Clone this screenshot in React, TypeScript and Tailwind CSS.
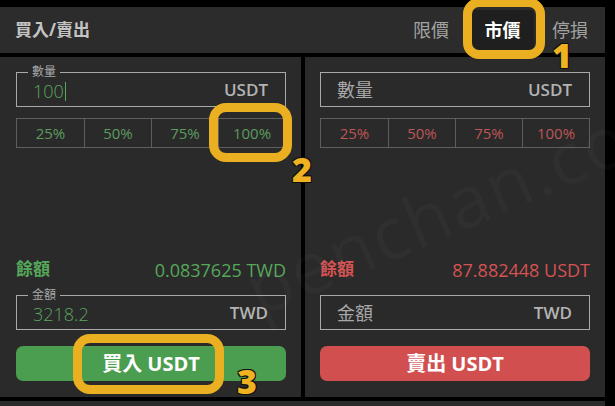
import React from 'react';

const FONT = '"Open Sans", "Noto Sans CJK TC", sans-serif';

type Side = 'buy' | 'sell';

function Field({
  label,
  value,
  unit,
  side,
}: {
  label: string;
  value?: string;
  unit: string;
  side: Side;
}) {
  return (
    <div className="relative flex h-[35px] items-center justify-between border border-[#a9a9a9] pl-[16px] pr-[17px]">
      {value ? (
        <>
          <span className="absolute left-[11px] top-[-8px] bg-[#2a2a2a] px-[4px] text-[12px] leading-[14px] text-[#a8a8a8]">
            {label}
          </span>
          <span
            className={`mt-[3px] flex items-center text-[18px] font-light leading-none ${
              side === 'buy' ? 'text-[#5aa65e]' : 'text-[#d45454]'
            }`}
          >
            {value}
            {label === '數量' ? <span className="ml-[1px] h-[19px] w-px bg-[#5aa65e]" /> : null}
          </span>
        </>
      ) : (
        <span className="text-[18px] leading-none text-[#a8a8a8]">{label}</span>
      )}
      <span className="text-[17px] font-semibold leading-none text-[#b3b3b3]">{unit}</span>
    </div>
  );
}

function Percents({ side }: { side: Side }) {
  const color = side === 'buy' ? 'text-[#5b9c5e]' : 'text-[#bd5656]';
  return (
    <div className="grid h-[30px] grid-cols-4 border border-[#5e5e5e]">
      {['25%', '50%', '75%', '100%'].map((p, i) => (
        <div
          key={p}
          className={`flex items-center justify-center text-[15px] ${color} ${
            i > 0 ? 'border-l border-[#5e5e5e]' : ''
          }`}
        >
          {p}
        </div>
      ))}
    </div>
  );
}

function Panel({ side }: { side: Side }) {
  const buy = side === 'buy';
  const accent = buy ? 'text-[#55a85a]' : 'text-[#d65252]';
  return (
    <section
      className={`flex h-full flex-col bg-[#2a2a2a] pb-[16px] pt-[15px] ${
        buy ? 'w-[301px] pl-[16px] pr-[15px]' : 'w-[300px] pl-[15px] pr-[15px]'
      }`}
    >
      <Field label="數量" value={buy ? '100' : undefined} unit="USDT" side={side} />
      <div className="mt-[11px]">
        <Percents side={side} />
      </div>
      <div className="flex-1" />
      <div className={`flex items-center justify-between ${accent}`}>
        <span className="text-[17px] font-bold">餘額</span>
        <span className="mt-[3px] text-[18px] leading-none">{buy ? '0.0837625 TWD' : '87.882448 USDT'}</span>
      </div>
      <div className="mt-[14px]">
        <Field label="金額" value={buy ? '3218.2' : undefined} unit="TWD" side={side} />
      </div>
      <button
        className={`mt-[16px] flex h-[35px] items-center justify-center rounded-[7px] text-[20px] font-bold text-white ${
          buy ? 'bg-[#4b9d4f]' : 'bg-[#d14f4f]'
        }`}
      >
        {buy ? '買入 USDT' : '賣出 USDT'}
      </button>
    </section>
  );
}

const mark =
  'absolute text-[34px] font-extrabold leading-none text-[#efb321] [text-shadow:1px_1px_0_#111,-1px_-1px_0_#111,1px_-1px_0_#111,-1px_1px_0_#111]';

export default function App() {
  return (
    <div className="relative h-[406px] w-[615px] overflow-hidden bg-black" style={{ fontFamily: FONT }}>
      <div className="flex w-[605px] flex-col pt-[7px]">
        <header className="flex h-[46px] items-center justify-between bg-[#2c2c2c] pl-[15px] pr-[17px]">
          <h1 className="text-[17px] font-bold text-[#c4c4c4]">買入/賣出</h1>
          <nav className="flex items-center text-[18px]">
            <span className="text-[#a3a3a3]">限價</span>
            <span className="ml-[22px] flex h-[40px] w-[63px] items-center justify-center rounded-[4px] bg-[#1f1f1f] font-bold text-white">
              市價
            </span>
            <span className="ml-[18px] text-[#a3a3a3]">停損</span>
          </nav>
        </header>
        <div className="mt-[4px] flex h-[340px] gap-[4px]">
          <Panel side="buy" />
          <Panel side="sell" />
        </div>
        <div className="mt-[4px] h-[10px] bg-[#2a2a2a]" />
      </div>

      {/* watermark */}
      <div className="pointer-events-none absolute left-[232px] top-[176px] rotate-[-23deg] text-[72px] leading-none tracking-[2px] text-white/[0.025]">
        penchan.co
      </div>

      {/* annotations */}
      <div className="pointer-events-none absolute left-[463px] top-[-2px] h-[61px] w-[82px] rounded-[16px] border-[9px] border-[#ebb022]" />
      <span className={`${mark} left-[552px] top-[38px]`}>1</span>
      <div className="pointer-events-none absolute left-[209px] top-[103px] h-[59px] w-[83px] rounded-[17px] border-[9px] border-[#ebb022]" />
      <span className={`${mark} left-[292px] top-[152px]`}>2</span>
      <div className="pointer-events-none absolute left-[73px] top-[334px] h-[60px] w-[151px] rounded-[17px] border-[9px] border-[#ebb022]" />
      <span className={`${mark} left-[237px] top-[364px]`}>3</span>
    </div>
  );
}
